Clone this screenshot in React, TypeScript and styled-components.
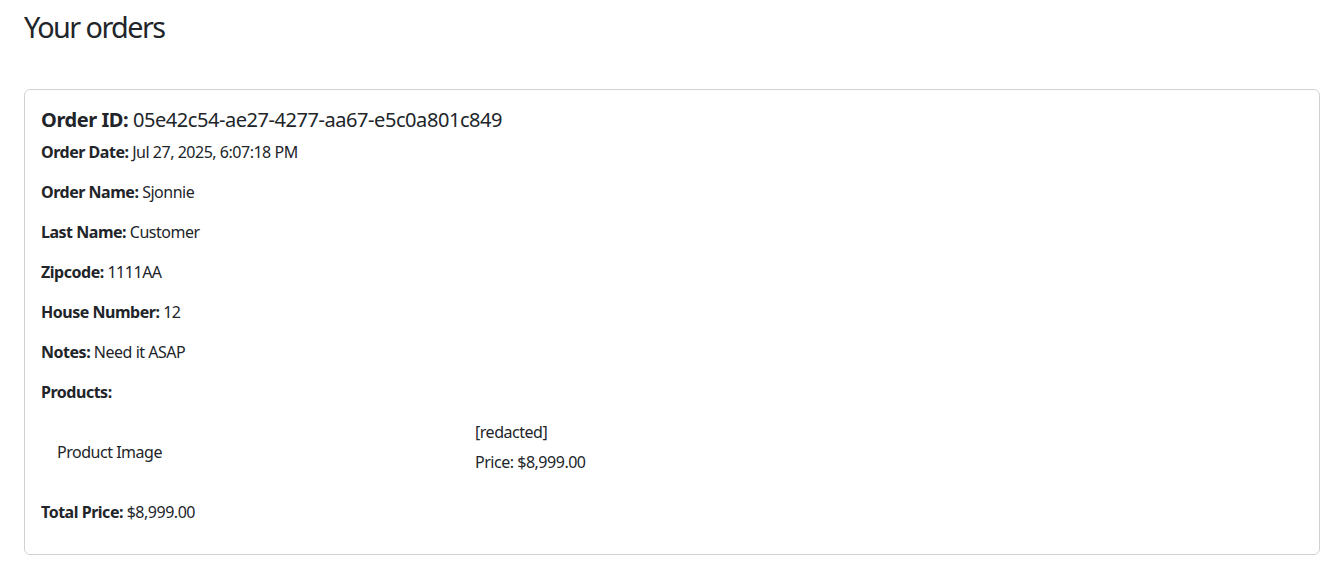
import React from "react";
import styled, { createGlobalStyle } from "styled-components";

const Global = createGlobalStyle`
  html, body { margin: 0; padding: 0; background: #fff; }
  body {
    font-family: "Segoe UI", "Noto Sans", "Liberation Sans", sans-serif;
    font-size: 16px;
    line-height: 1.5;
    color: #212529;
    letter-spacing: -0.03em;
  }
  * { box-sizing: border-box; }
`;

const Page = styled.main`
  padding: 10px 17px 0 24px;
`;

const Title = styled.h3`
  margin: 0 0 44px;
  font-size: 28.8px;
  font-weight: 400;
  line-height: 1.2;
  letter-spacing: -0.055em;
`;

const Card = styled.section`
  border: 1px solid rgba(0, 0, 0, 0.175);
  border-radius: 6px;
  padding: 18px 16px 14px;
`;

const OrderHeading = styled.h5`
  margin: 0 0 8px;
  font-size: 20px;
  font-weight: 400;
  line-height: 1.2;
  letter-spacing: -0.022em;
`;

const Field = styled.p`
  margin: 0 0 16px;
`;

const ProductRow = styled.div`
  display: flex;
  align-items: center;
  height: 64px;
  margin-bottom: 16px;
`;

const ImageCell = styled.div`
  width: 434px;
  padding-left: 16px;
  flex: none;
`;

const InfoCell = styled.div`
  display: flex;
  flex-direction: column;
  gap: 6px;
  align-self: flex-start;
`;

const Line = styled.span``;

const fields: [string, string][] = [
  ["Order Date:", "Jul 27, 2025, 6:07:18 PM"],
  ["Order Name:", "Sjonnie"],
  ["Last Name:", "Customer"],
  ["Zipcode:", "1111AA"],
  ["House Number:", "12"],
  ["Notes:", "Need it ASAP"],
];

export default function App() {
  return (
    <>
      <Global />
      <Page>
        <Title>Your orders</Title>
        <Card>
          <OrderHeading>
            <strong>Order ID:</strong> 05e42c54-ae27-4277-aa67-e5c0a801c849
          </OrderHeading>
          {fields.map(([k, v]) => (
            <Field key={k}>
              <strong>{k}</strong> {v}
            </Field>
          ))}
          <Field>
            <strong>Products:</strong>
          </Field>
          <ProductRow>
            <ImageCell>Product Image</ImageCell>
            <InfoCell>
              <Line>[redacted]</Line>
              <Line>Price: $8,999.00</Line>
            </InfoCell>
          </ProductRow>
          <Field>
            <strong>Total Price:</strong> $8,999.00
          </Field>
        </Card>
      </Page>
    </>
  );
}
